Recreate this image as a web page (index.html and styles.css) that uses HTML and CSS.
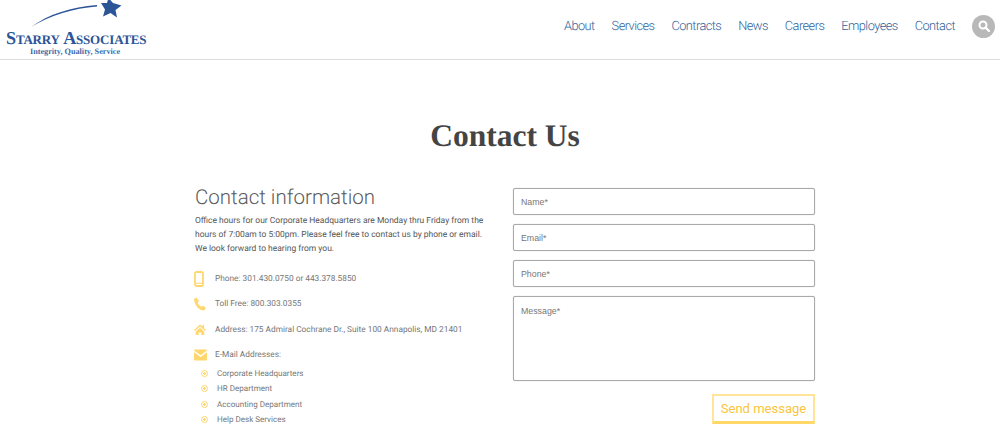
FILE: index.html
```html
<!DOCTYPE html>
<html lang="en">
<head>
  <meta charset="UTF-8" />
  <meta name="viewport" content="width=device-width, initial-scale=1.0"/>
  <title>Starry Associates - Contact Us</title>
  <link rel="stylesheet" href="styles.css">
</head>

<body>
  <header class="site-header">
    <a class="logo" href="#">
      <svg class="logo-mark" width="120" height="28" viewBox="0 0 120 28">
        <path d="M26 27 C44 14 66 7 92 5 L92 6.500 C68 8.500 46 15 26 27 Z" fill="#2b5597"/>
        <path d="M103.500 -2 L108 3 L116.500 5.500 L110.500 10 L112 17.500 L105.500 13 L98 16.500 L100 9.500 L96 3 L102 3 Z" fill="#2b5597"/>
      </svg>
      <span class="logo-name">Starry Associates</span>
      <span class="logo-tag">Integrity, Quality, Service</span>
    </a>
    <nav class="main-nav">
      <a href="#">About</a>
      <a href="#">Services</a>
      <a href="#">Contracts</a>
      <a href="#">News</a>
      <a href="#">Careers</a>
      <a href="#">Employees</a>
      <a href="#">Contact</a>
      <button class="search-btn" aria-label="Search">
        <svg width="12" height="12" viewBox="0 0 12 12"><circle cx="5" cy="5" r="3.500" fill="none" stroke="#fff" stroke-width="2"/><path d="M7.500 7.500 L11 11" stroke="#fff" stroke-width="2.200" stroke-linecap="round"/></svg>
      </button>
    </nav>
  </header>

  <main class="contact-page">
    <h1>Contact Us</h1>
    <div class="contact-cols">
      <section class="contact-info">
        <h2>Contact information</h2>
        <p class="intro">Office hours for our Corporate Headquarters are Monday thru Friday from the hours of 7:00am to 5:00pm. Please feel free to contact us by phone or email. We look forward to hearing from you.</p>

        <div class="info-row">
          <svg class="info-icon" width="16" height="16" viewBox="0 0 16 16"><rect x="2" y="1" width="8" height="14" rx="1.500" fill="none" stroke="#ffd76e" stroke-width="1.800"/><path d="M2.500 12.300 H9.500" stroke="#ffd76e"/></svg>
          <span>Phone: 301.430.0750 or 443.378.5850</span>
        </div>
        <div class="info-row">
          <svg class="info-icon" width="16" height="16" viewBox="0 0 16 16"><path d="M1 3 L3.500 1.500 L6 5 L4.500 6.800 C5.300 8.500 6.800 10 8.500 11 L10 9.500 L13 12 L11 14.500 C6 14.500 1.300 9 1 3 Z" fill="#ffd76e"/></svg>
          <span>Toll Free: 800.303.0355</span>
        </div>
        <div class="info-row">
          <svg class="info-icon" width="16" height="16" viewBox="0 0 16 16"><path d="M1 8 L7 2.500 L9.500 4.800 V3 H11 V6.200 L13 8 L12.200 9 L7 4.400 L1.800 9 Z M2.800 9.500 L7 5.800 L11.200 9.500 V13 H8.300 V10.500 H5.700 V13 H2.800 Z" fill="#ffd76e"/></svg>
          <span>Address: 175 Admiral Cochrane Dr., Suite 100 Annapolis, MD 21401</span>
        </div>
        <div class="info-row">
          <svg class="info-icon" width="16" height="16" viewBox="0 0 16 16"><path d="M2 2.500 H13 C13.600 2.500 14 3 14 3.600 L7.500 8.300 L1 3.600 C1 3 1.400 2.500 2 2.500 Z M1 5.300 L7.500 10 L14 5.300 V12.500 C14 13 13.600 13.500 13 13.500 H2 C1.400 13.500 1 13 1 12.500 Z" fill="#ffd76e"/></svg>
          <span>E-Mail Addresses:</span>
        </div>
        <ul class="mail-list">
          <li><a href="#">Corporate Headquarters</a></li>
          <li><a href="#">HR Department</a></li>
          <li><a href="#">Accounting Department</a></li>
          <li><a href="#">Help Desk Services</a></li>
        </ul>
      </section>

      <form class="contact-form">
        <input type="text" placeholder="Name*">
        <input type="text" placeholder="Email*">
        <input type="text" placeholder="Phone*">
        <textarea placeholder="Message*"></textarea>
        <button type="submit" class="send-btn">Send message</button>
      </form>
    </div>
  </main>
</body>
</html>
```

FILE: styles.css
```css
html, body {
  height: 433px;
  overflow: hidden;
}
body {
  margin: 0;
  font-family: Roboto, sans-serif;
  background: #fff;
  color: #666;
  text-rendering: geometricPrecision;
}
.site-header {
  display: flex;
  justify-content: space-between;
  height: 59px;
  border-bottom: 1px solid #dcdcdc;
  padding: 0 5px 0 5px;
}
.logo {
  display: flex;
  flex-direction: column;
  text-decoration: none;
  color: #2b5597;
  font-family: "Liberation Serif", serif;
  font-weight: bold;
}
.logo-mark {
  display: block;
  margin-bottom: 1.500px;
  overflow: hidden;
}
.logo-name {
  font-size: 18.100px;
  letter-spacing: -0.180px;
  line-height: 17px;
  font-variant: small-caps;
  white-space: nowrap;
  padding-left: 1px;
}
.logo-tag {
  margin-top: 1px;
  font-size: 8.200px;
  line-height: 8px;
  padding-left: 25px;
  color: #3c6aa8;
}
.main-nav {
  display: flex;
  align-items: center;
  gap: 17px;
  height: 52px;
}
.main-nav a {
  font-size: 12.800px;
  font-weight: 300;
  letter-spacing: -0.560px;
  color: #2f6399;
  text-decoration: none;
}
.search-btn {
  display: flex;
  align-items: center;
  justify-content: center;
  width: 23px;
  height: 23px;
  padding: 0;
  border: none;
  border-radius: 50%;
  background: #b8b8b8;
}
.contact-page {
  width: 620px;
  margin-left: 195px;
}
h1 {
  margin: 58px 0 0;
  font-family: "Liberation Serif", Georgia, serif;
  font-size: 31.500px;
  line-height: 36px;
  font-weight: bold;
  color: #444;
  text-align: center;
  height: 70px;
}
.contact-cols {
  display: flex;
  justify-content: space-between;
}
.contact-info {
  width: 292px;
  padding-top: 1px;
}
h2 {
  margin: 0 0 7px;
  font-size: 20.500px;
  line-height: 18px;
  font-weight: 300;
  color: #5c5c5c;
}
.intro {
  margin: 0 0 10px;
  font-size: 8.480px;
  line-height: 14px;
  color: #555;
}
.info-row {
  display: flex;
  align-items: center;
  height: 25.500px;
  font-size: 8.300px;
  color: #777;
}
.info-icon {
  width: 16px;
  margin-left: -2px;
  margin-right: 6px;
  flex-shrink: 0;
}
.mail-list {
  list-style: none;
  margin: -2px 0 0;
  padding: 0 0 0 5px;
}
.mail-list li {
  position: relative;
  padding-left: 17px;
  height: 15.400px;
  line-height: 15.400px;
  font-size: 8.050px;
}
.mail-list li::before {
  content: "";
  position: absolute;
  left: 1px;
  top: 4px;
  width: 5px;
  height: 5px;
  border: 1px solid #ffd76e;
  border-radius: 50%;
  background: radial-gradient(circle, #ffd76e 0 1px, #fff 1.500px);
}
.mail-list a {
  color: #777;
  text-decoration: none;
}
.contact-form {
  display: flex;
  flex-direction: column;
  align-items: flex-end;
  width: 302px;
}
.contact-form input,
.contact-form textarea {
  display: block;
  box-sizing: border-box;
  width: 100%;
  height: 27px;
  margin: 0 0 9px;
  padding: 0 7px;
  border: 1px solid #a9a9a9;
  border-radius: 2px;
  box-shadow: 0 0 1px #bbb;
  font-family: "Liberation Sans", sans-serif;
  font-size: 8.800px;
  resize: none;
  outline: none;
}
.contact-form textarea {
  height: 85px;
  margin-bottom: 12.500px;
  padding-top: 9px;
}
.contact-form ::placeholder {
  color: #777;
}
.send-btn {
  width: 103px;
  height: 30px;
  padding: 0;
  background: #fff;
  border: 2px solid #ffe49a;
  border-bottom: 3px solid #ffd968;
  color: #f9c53c;
  font-family: Roboto, sans-serif;
  font-size: 13px;
}
```
